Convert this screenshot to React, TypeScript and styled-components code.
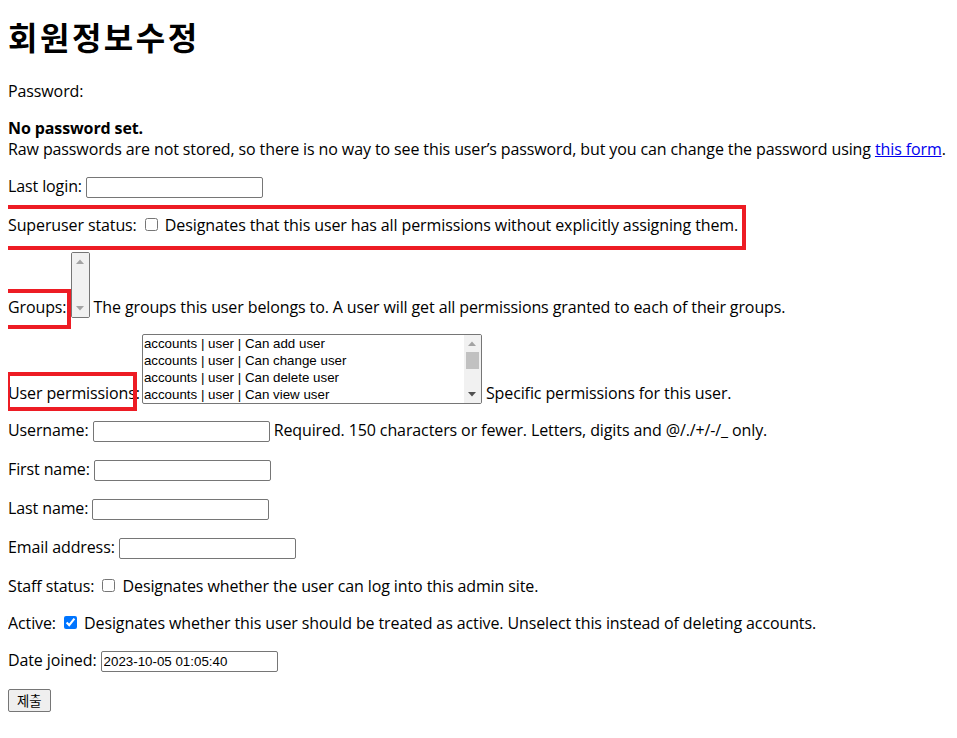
import React from "react";
import styled, { createGlobalStyle } from "styled-components";

const Global = createGlobalStyle`
  body {
    margin: 8px;
    font-family: "Open Sans", "Noto Sans CJK KR", sans-serif;
    font-size: 16px;
    letter-spacing: -0.11px;
    line-height: 21px;
    color: #000;
    background: #fff;
  }
`;

const Title = styled.h1`
  font-family: "Noto Sans CJK KR", sans-serif;
  font-size: 32px;
  font-weight: 700;
  letter-spacing: 2.5px;
  line-height: 38px;
  margin: 9px 0 26px;
`;

const Row = styled.p`
  position: relative;
  margin: 16px 0;
`;

const Block = styled.div`
  white-space: nowrap;
`;

const Label = styled.label``;

const TextInput = styled.input`
  box-sizing: border-box;
  width: 177px;
  height: 21px;
  margin: 0 0 1px;
  border: 1px solid #767676;
  border-radius: 2px;
  padding: 1px 2px;
  font-family: "Liberation Sans", Arial, sans-serif;
  font-size: 13.33px;
  letter-spacing: 0;
  color: #000;
  background: #fff;
`;

const Check = styled.input`
  width: 13px;
  height: 13px;
  margin: 3px 3px 3px 4px;
  accent-color: #0075ff;
`;

const ListBox = styled.div<{ $w: number; $h: number }>`
  display: inline-block;
  vertical-align: -5px;
  box-sizing: border-box;
  width: ${(p) => p.$w}px;
  height: ${(p) => p.$h}px;
  margin-left: ${(p) => (p.$w > 100 ? -2 : 0)}px;
  border: 1px solid #767676;
  border-radius: 2px;
  overflow: hidden;
  background: #fff;
  letter-spacing: 0;
`;

const ListInner = styled.div`
  display: flex;
  height: 100%;
`;

const Options = styled.div`
  flex: 1;
  min-width: 0;
`;

const Option = styled.div`
  height: 17px;
  padding: 0 2px 0 1px;
  font-family: "Liberation Sans", Arial, sans-serif;
  font-size: 13.33px;
  line-height: 17px;
  white-space: nowrap;
  color: #000;
`;

const ScrollBar = styled.div`
  width: 17px;
  flex: none;
  display: flex;
  flex-direction: column;
  background: #f1f1f1;
`;

const ScrollButton = styled.div`
  height: 17px;
  flex: none;
  display: flex;
  align-items: center;
  justify-content: center;
`;

const Track = styled.div`
  flex: 1;
  padding: 0 2px;
`;

const Thumb = styled.div`
  height: 17px;
  background: #c1c1c1;
`;

const Link = styled.a`
  color: #0000ee;
  text-decoration: underline;
`;

const Mark = styled.span<{ $l: number; $t: number; $w: number; $h: number }>`
  position: absolute;
  left: ${(p) => p.$l}px;
  top: ${(p) => p.$t}px;
  width: ${(p) => p.$w}px;
  height: ${(p) => p.$h}px;
  box-sizing: border-box;
  border: 4px solid #ed1c24;
  pointer-events: none;
`;

const Submit = styled.button`
  font-family: "Noto Sans CJK KR", sans-serif;
  font-size: 13.33px;
  letter-spacing: 0;
  padding: 1px 8px;
  height: 23px;
  line-height: 19px;
  background: #efefef;
  border: 1px solid #767676;
  border-radius: 2px;
  color: #000;
`;

function Arrow({ up, color }: { up?: boolean; color: string }) {
  return (
    <svg width="8" height="5" viewBox="0 0 8 5" aria-hidden="true">
      <polygon points={up ? "0,5 8,5 4,0.5" : "0,0 8,0 4,4.5"} fill={color} />
    </svg>
  );
}

function MultiSelect({
  width,
  height,
  items,
  thumb,
  upColor,
  downColor,
}: {
  width: number;
  height: number;
  items: string[];
  thumb: boolean;
  upColor: string;
  downColor: string;
}) {
  return (
    <ListBox $w={width} $h={height} role="listbox" aria-multiselectable="true">
      <ListInner>
        <Options>
          {items.map((it) => (
            <Option key={it} role="option" aria-selected="false">
              {it}
            </Option>
          ))}
        </Options>
        <ScrollBar>
          <ScrollButton>
            <Arrow up color={upColor} />
          </ScrollButton>
          <Track>{thumb && <Thumb />}</Track>
          <ScrollButton>
            <Arrow color={downColor} />
          </ScrollButton>
        </ScrollBar>
      </ListInner>
    </ListBox>
  );
}

const perms = [
  "accounts | user | Can add user",
  "accounts | user | Can change user",
  "accounts | user | Can delete user",
  "accounts | user | Can view user",
];

export default function App() {
  return (
    <>
      <Global />
      <Title>회원정보수정</Title>
      <form onSubmit={(e) => e.preventDefault()}>
        <Row>
          <Label>Password:</Label>
        </Row>
        <Block>
          <strong>No password set.</strong>
        </Block>
        <Block>
          Raw passwords are not stored, so there is no way to see this user’s password, but you can change the
          password using <Link href="#">this form</Link>.
        </Block>
        <Row>
          <Label>Last login:</Label> <TextInput type="text" />
        </Row>
        <Row>
          <Label>Superuser status:</Label> <Check type="checkbox" />{" "}
          <span>Designates that this user has all permissions without explicitly assigning them.</span>
          <Mark $l={-8} $t={-10} $w={746} $h={45} />
        </Row>
        <Row>
          <Label>Groups:</Label>{" "}
          <MultiSelect width={19} height={66} items={[]} thumb={false} upColor="#a3a3a3" downColor="#a3a3a3" />{" "}
          <span>The groups this user belongs to. A user will get all permissions granted to each of their groups.</span>
          <Mark $l={-5} $t={37} $w={68} $h={40} />
        </Row>
        <Row>
          <Label>User permissions:</Label>{" "}
          <MultiSelect width={340} height={70} items={perms} thumb upColor="#a3a3a3" downColor="#505050" />{" "}
          <span>Specific permissions for this user.</span>
          <Mark $l={-2} $t={38} $w={131} $h={39} />
        </Row>
        <Row>
          <Label>Username:</Label> <TextInput type="text" />{" "}
          <span>Required. 150 characters or fewer. Letters, digits and @/./+/-/_ only.</span>
        </Row>
        <Row>
          <Label>First name:</Label> <TextInput type="text" />
        </Row>
        <Row>
          <Label>Last name:</Label> <TextInput type="text" />
        </Row>
        <Row>
          <Label>Email address:</Label> <TextInput type="email" />
        </Row>
        <Row>
          <Label>Staff status:</Label> <Check type="checkbox" />{" "}
          <span>Designates whether the user can log into this admin site.</span>
        </Row>
        <Row>
          <Label>Active:</Label> <Check type="checkbox" defaultChecked />{" "}
          <span>Designates whether this user should be treated as active. Unselect this instead of deleting accounts.</span>
        </Row>
        <Row>
          <Label>Date joined:</Label> <TextInput type="text" defaultValue="2023-10-05 01:05:40" />
        </Row>
        <Submit type="submit">제출</Submit>
      </form>
    </>
  );
}
